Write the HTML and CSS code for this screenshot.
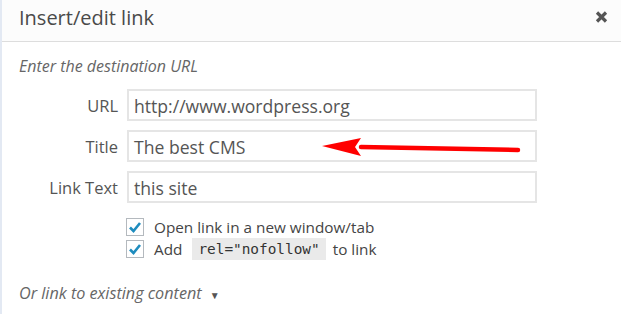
FILE: index.html
```html
<!DOCTYPE html>
<html lang="en">
<head>
    <meta charset="UTF-8">
    <title>Insert/edit link</title>
    <link rel="stylesheet" href="styles.css">
</head>
<body>
    <div class="dialog">
        <div class="dialog-header">
            <h1>Insert/edit link</h1>
            <svg class="close" width="13" height="12" viewBox="0 0 13 12">
                <path d="M2 1.5 L11 10.5 M11 1.5 L2 10.5" stroke="#555" stroke-width="3.2" fill="none"/>
            </svg>
        </div>
        <div class="dialog-body">
            <p class="hint">Enter the destination URL</p>

            <div class="field">
                <label>URL</label>
                <div class="input">http://www.wordpress.org</div>
            </div>
            <div class="field">
                <label>Title</label>
                <div class="input">The best CMS</div>
                <svg class="arrow" width="210" height="24" viewBox="0 0 210 24">
                    <path d="M40 12 L197 15" stroke="#f00" stroke-width="4.5" stroke-linecap="round" fill="none"/>
                    <path d="M1 11 L40 3 L34 12 L40 21 Z" fill="#f00"/>
                </svg>
            </div>
            <div class="field">
                <label>Link Text</label>
                <div class="input">this site</div>
            </div>

            <div class="options">
                <div class="check-row">
                    <span class="checkbox">
                        <svg width="14" height="14" viewBox="0 0 14 14"><path d="M2 7.5 L5.5 11 L12 3" stroke="#1e8cbe" stroke-width="2.6" fill="none"/></svg>
                    </span>
                    Open link in a new window/tab
                </div>
                <div class="check-row">
                    <span class="checkbox">
                        <svg width="14" height="14" viewBox="0 0 14 14"><path d="M2 7.5 L5.5 11 L12 3" stroke="#1e8cbe" stroke-width="2.6" fill="none"/></svg>
                    </span>
                    Add <code>rel="nofollow"</code> to link
                </div>
            </div>

            <p class="existing">Or link to existing content <span class="caret">&#9660;</span></p>
        </div>
    </div>
</body>
</html>
```

FILE: styles.css
```css
body {
    margin: 0;
    font-family: 'Open Sans', 'Noto Sans', sans-serif;
    background: #fff;
    color: #444;
}
.dialog {
    width: 621px;
    height: 314px;
    border-left: 2px solid #e3e9f3;
    box-sizing: border-box;
    overflow: hidden;
}
.dialog-header {
    height: 41px;
    background: #fcfcfc;
    border-bottom: 1px solid #dddddd;
    display: flex;
    align-items: center;
    justify-content: space-between;
    padding: 0 13px 0 17px;
}
.dialog-header h1 {
    margin: 0;
    font-size: 20px;
    font-weight: 400;
    color: #4a4a4a;
    margin-top: -6px;
}
.close {
    margin-top: -7px;
}
.dialog-body {
    padding: 0 17px;
}
.hint {
    margin: 13px 0 12px;
    font-size: 16px;
    font-style: italic;
    color: #666;
}
.field {
    display: flex;
    align-items: center;
    margin-bottom: 9px;
    position: relative;
}
.field label {
    width: 99px;
    text-align: right;
    padding-right: 9px;
    font-size: 16.5px;
    color: #555;
}
.input {
    width: 396px;
    height: 28px;
    line-height: 30px;
    border: 2px solid #e5e5e5;
    padding: 0 5px;
    font-size: 17.6px;
    color: #555;
}
.arrow {
    position: absolute;
    left: 302px;
    top: 5px;
}
.options {
    padding-left: 107px;
    margin-top: 13px;
}
.check-row {
    display: flex;
    align-items: center;
    height: 22px;
    font-size: 15.3px;
    color: #444;
}
.checkbox {
    width: 16px;
    height: 16px;
    border: 1px solid #b4b9be;
    display: inline-flex;
    align-items: center;
    justify-content: center;
    margin-right: 10px;
    background: #fff;
}
code {
    font-family: 'DejaVu Sans Mono', monospace;
    font-size: 14.4px;
    background: #eaeaea;
    padding: 3px 6px;
    margin: 0 7px 0 10px;
    color: #333;
}
.existing {
    margin: 22px 0 0;
    font-size: 16.2px;
    font-style: italic;
    color: #666;
}
.caret {
    font-style: normal;
    font-size: 10px;
    margin-left: 4px;
    color: #555;
}
```
